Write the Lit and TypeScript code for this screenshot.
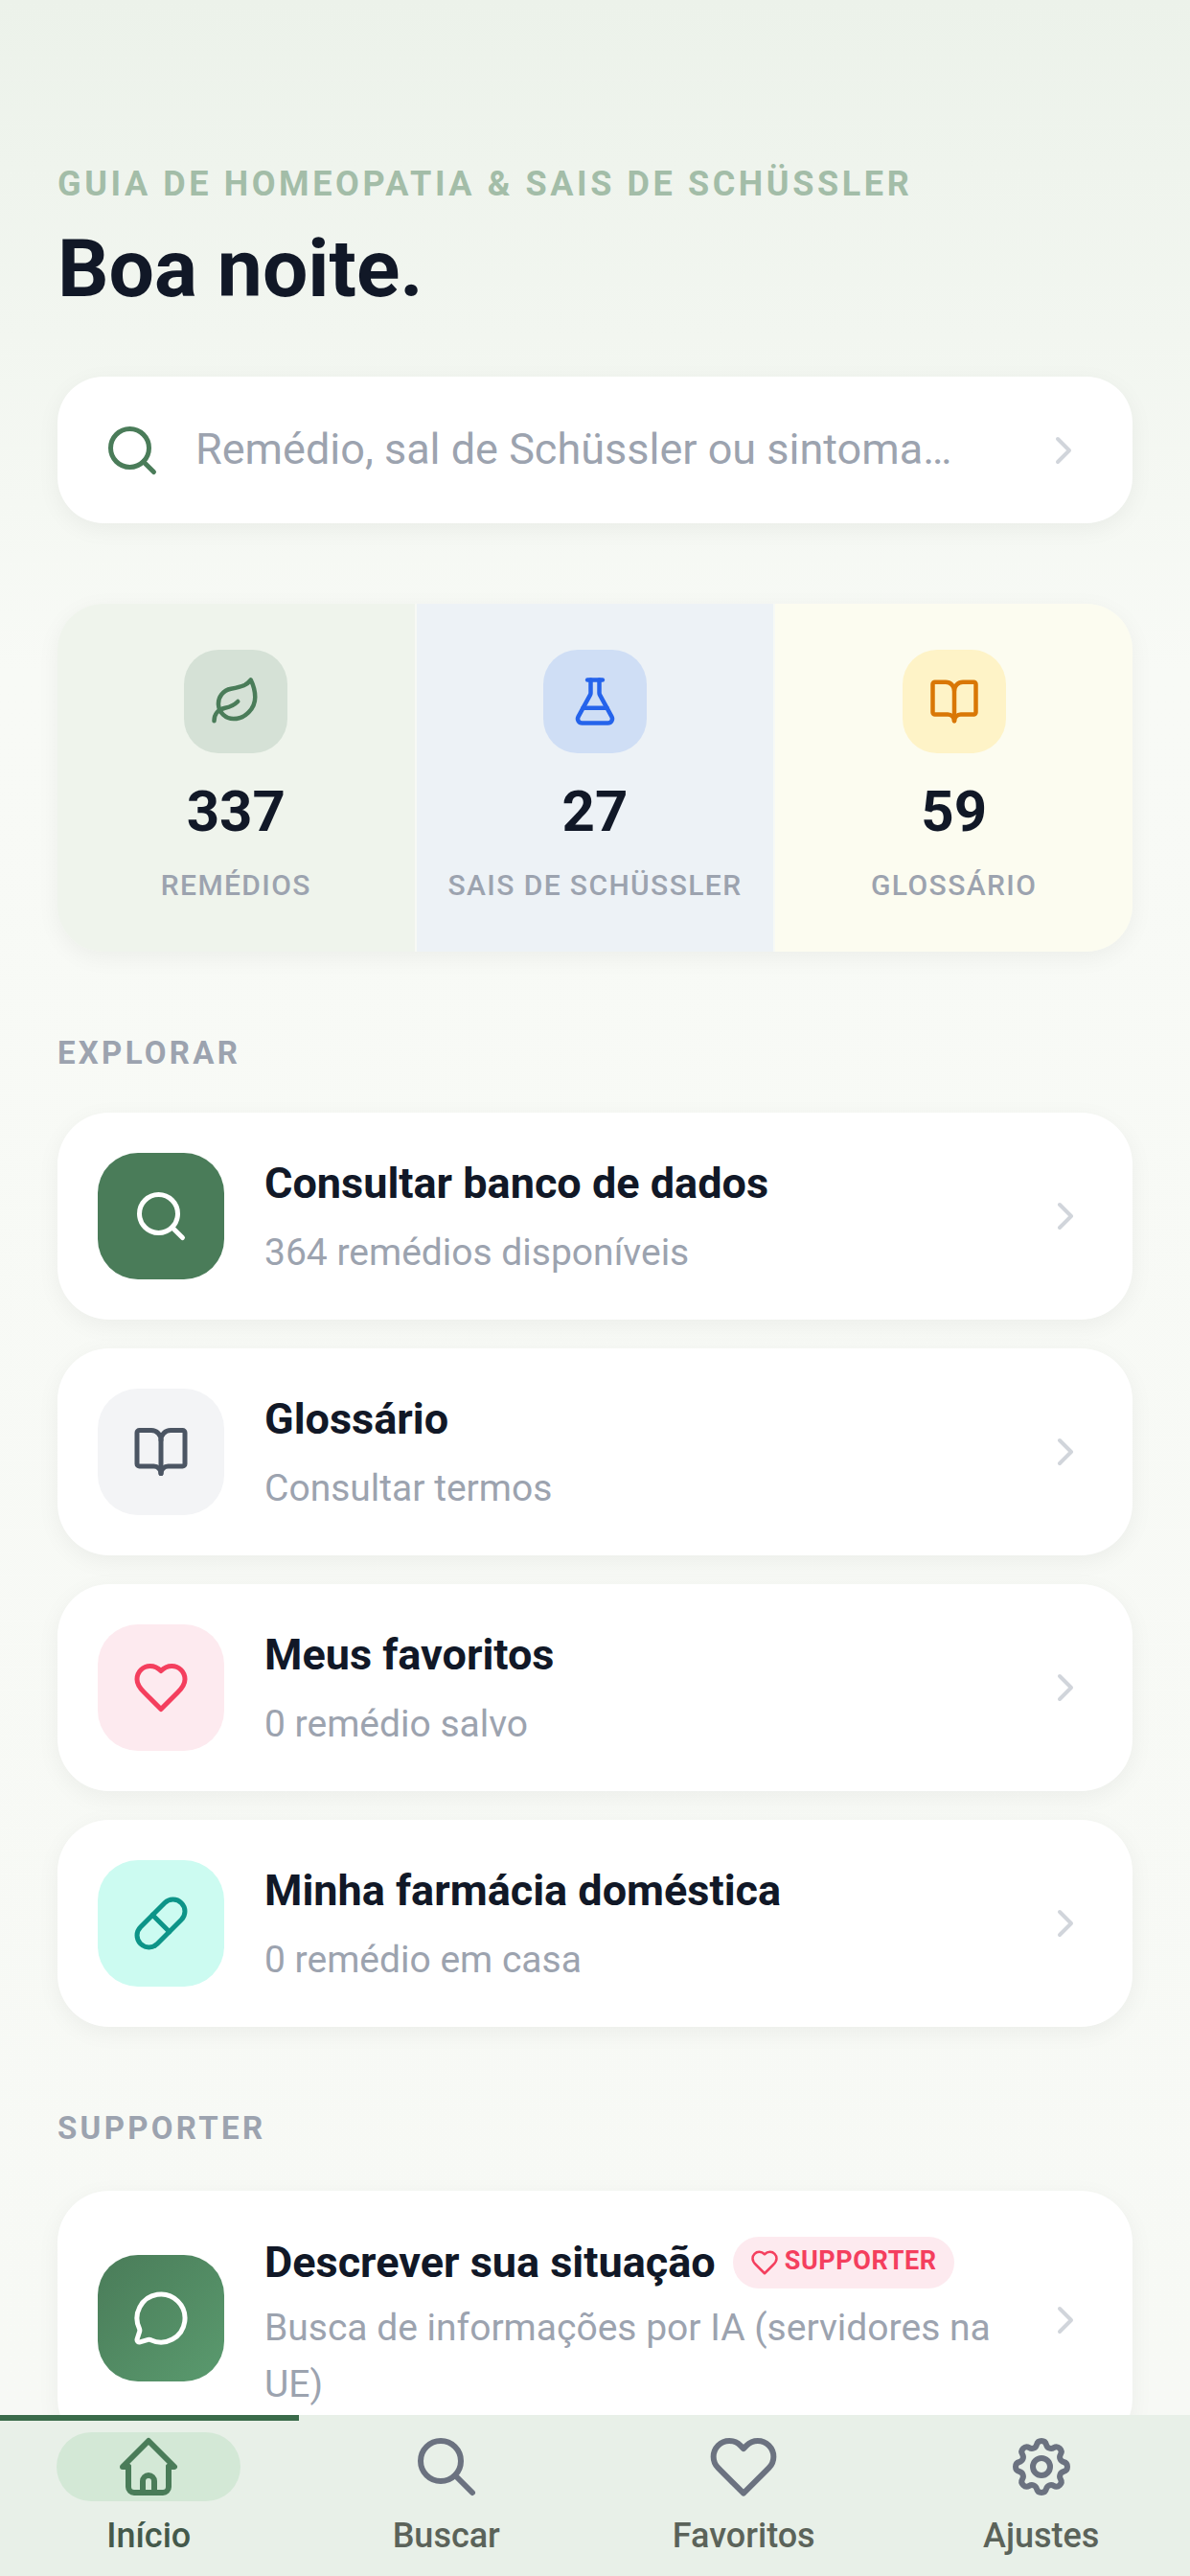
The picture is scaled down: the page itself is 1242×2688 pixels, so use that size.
import { LitElement, html, css, svg } from 'lit';
import { customElement } from 'lit/decorators.js';

const icons = {
  search: svg`<path d="m21 21-4.34-4.34"/><circle cx="11" cy="11" r="8"/>`,
  chevron: svg`<path d="m9 18 6-6-6-6"/>`,
  leaf: svg`<path d="M11 20A7 7 0 0 1 9.8 6.1C15.5 5 17 4.48 19 2c1 2 2 4.18 2 8 0 5.5-4.78 10-10 10Z"/><path d="M2 21c0-3 1.85-5.36 5.08-6C9.5 14.52 12 13 13 12"/>`,
  flask: svg`<path d="M14 2v6a2 2 0 0 0 .245.96l5.51 10.08A2 2 0 0 1 18 22H6a2 2 0 0 1-1.755-2.96l5.51-10.08A2 2 0 0 0 10 8V2"/><path d="M6.453 15h11.094"/><path d="M8.5 2h7"/>`,
  book: svg`<path d="M12 7v14"/><path d="M3 18a1 1 0 0 1-1-1V4a1 1 0 0 1 1-1h5a4 4 0 0 1 4 4 4 4 0 0 1 4-4h5a1 1 0 0 1 1 1v13a1 1 0 0 1-1 1h-6a3 3 0 0 0-3 3 3 3 0 0 0-3-3z"/>`,
  heart: svg`<path d="M19 14c1.49-1.46 3-3.21 3-5.5A5.5 5.5 0 0 0 16.5 3c-1.76 0-3 .5-4.5 2-1.5-1.5-2.74-2-4.5-2A5.5 5.5 0 0 0 2 8.5c0 2.3 1.5 4.05 3 5.5l7 7Z"/>`,
  pill: svg`<path d="m10.5 20.5 10-10a4.95 4.95 0 1 0-7-7l-10 10a4.95 4.95 0 1 0 7 7Z"/><path d="m8.5 8.5 7 7"/>`,
  chat: svg`<path d="M2.992 16.342a2 2 0 0 1 .094 1.167l-1.065 3.29a1 1 0 0 0 1.236 1.168l3.413-.998a2 2 0 0 1 1.099.092 10 10 0 1 0-4.777-4.719"/>`,
  // the tab bar uses a different icon set from the cards
  tabHouse: svg`<path d="M5 12H3l9-9 9 9h-2"/><path d="M5 12v7a2 2 0 0 0 2 2h10a2 2 0 0 0 2-2v-7"/><path d="M10 21v-4a2 2 0 0 1 4 0v4"/>`,
  tabSearch: svg`<circle cx="10" cy="10" r="7"/><path d="m21 21-6-6"/>`,
  tabHeart: svg`<path d="M20.84 4.61a5.5 5.5 0 0 0-7.78 0L12 5.67l-1.06-1.06a5.5 5.5 0 0 0-7.78 7.78l1.06 1.06L12 21.23l7.78-7.78 1.06-1.06a5.5 5.5 0 0 0 0-7.78z"/>`,
  tabGear: svg`<path d="M10.325 4.317c.426-1.756 2.924-1.756 3.35 0a1.724 1.724 0 0 0 2.573 1.066c1.543-.94 3.31.826 2.37 2.37a1.724 1.724 0 0 0 1.065 2.572c1.756.426 1.756 2.924 0 3.35a1.724 1.724 0 0 0-1.066 2.573c.94 1.543-.826 3.31-2.37 2.37a1.724 1.724 0 0 0-2.572 1.065c-.426 1.756-2.924 1.756-3.35 0a1.724 1.724 0 0 0-2.573-1.066c-1.543.94-3.31-.826-2.37-2.37a1.724 1.724 0 0 0-1.065-2.572c-1.756-.426-1.756-2.924 0-3.35a1.724 1.724 0 0 0 1.066-2.573c-.94-1.543.826-3.31 2.37-2.37 1 .608 2.296.07 2.572-1.065z"/><circle cx="12" cy="12" r="3"/>`,
};

type IconName = keyof typeof icons;

const icon = (name: IconName, cls: string) => html`
  <svg class=${cls} viewBox="0 0 24 24" fill="none" stroke="currentColor" stroke-width="2"
    stroke-linecap="round" stroke-linejoin="round">${icons[name]}</svg>
`;

const stats: { icon: IconName; tone: string; value: string; label: string }[] = [
  { icon: 'leaf', tone: 'green', value: '337', label: 'REMÉDIOS' },
  { icon: 'flask', tone: 'blue', value: '27', label: 'SAIS DE SCHÜSSLER' },
  { icon: 'book', tone: 'amber', value: '59', label: 'GLOSSÁRIO' },
];

const links: { icon: IconName; tone: string; title: string; sub: string }[] = [
  { icon: 'search', tone: 'brand', title: 'Consultar banco de dados', sub: '364 remédios disponíveis' },
  { icon: 'book', tone: 'gray', title: 'Glossário', sub: 'Consultar termos' },
  { icon: 'heart', tone: 'rose', title: 'Meus favoritos', sub: '0 remédio salvo' },
  { icon: 'pill', tone: 'teal', title: 'Minha farmácia doméstica', sub: '0 remédio em casa' },
];

const tabs: { icon: IconName; label: string; active?: boolean }[] = [
  { icon: 'tabHouse', label: 'Início', active: true },
  { icon: 'tabSearch', label: 'Buscar' },
  { icon: 'tabHeart', label: 'Favoritos' },
  { icon: 'tabGear', label: 'Ajustes' },
];

@customElement('app-root')
export class AppRoot extends LitElement {
  static styles = css`
    :host {
      display: flex;
      flex-direction: column;
      height: 2688px;
      overflow: hidden;
      font-family: Roboto, sans-serif;
      color: #111827;
      background: #f7f9f5;
    }
    svg {
      display: block;
      flex: none;
    }
    .page {
      flex: 1;
      min-height: 0;
      overflow: hidden;
      padding: 165px 60px 0;
      background: linear-gradient(180deg, #ecf2ea 0, #f8faf6 700px, #f7f9f5 100%);
    }
    .eyebrow {
      font-size: 36px;
      line-height: 54px;
      font-weight: 700;
      letter-spacing: 3.6px;
      color: #a3bda8;
    }
    h1 {
      margin: 11px 0 0;
      font-size: 84px;
      line-height: 102px;
      font-weight: 700;
    }
    .search {
      display: flex;
      align-items: center;
      gap: 36px;
      height: 153px;
      margin-top: 61px;
      padding: 0 48px;
      box-sizing: border-box;
      background: #fff;
      border-radius: 48px;
      box-shadow: 0 6px 24px rgba(0, 0, 0, 0.05);
    }
    .search input {
      flex: 1;
      min-width: 0;
      border: none;
      outline: none;
      padding: 0 0 3px;
      background: none;
      font: 400 45px Roboto, sans-serif;
      color: #111827;
    }
    .search input::placeholder {
      color: #9ca3af;
      opacity: 1;
    }
    .i60 {
      width: 60px;
      height: 60px;
    }
    .i54 {
      width: 54px;
      height: 54px;
    }
    .i72 {
      width: 72px;
      height: 72px;
    }
    .i30 {
      width: 30px;
      height: 30px;
    }
    .search .i60 {
      color: #4a7c59;
    }
    .chev {
      width: 48px;
      height: 48px;
      color: #d1d5db;
    }
    .stats {
      display: grid;
      grid-template-columns: repeat(3, 1fr);
      gap: 2px;
      margin-top: 84px;
      border-radius: 48px;
      overflow: hidden;
      background: #f7f9f5;
      box-shadow: 0 6px 24px rgba(0, 0, 0, 0.05);
    }
    .stat {
      display: flex;
      flex-direction: column;
      align-items: center;
      padding: 48px 0 47px;
    }
    .stat.green {
      background: #eff4ec;
    }
    .stat.blue {
      background: #edf2f6;
    }
    .stat.amber {
      background: #fcfcf0;
    }
    .stat-icon {
      display: flex;
      align-items: center;
      justify-content: center;
      width: 108px;
      height: 108px;
      border-radius: 36px;
    }
    .green .stat-icon {
      background: #d5e1d6;
      color: #4a7c59;
    }
    .blue .stat-icon {
      background: #cfdef5;
      color: #2563eb;
    }
    .amber .stat-icon {
      background: #fef3c7;
      color: #d97706;
    }
    .value {
      margin-top: 25px;
      font-size: 60px;
      line-height: 72px;
      font-weight: 700;
    }
    .label {
      margin-top: 18px;
      font-size: 30px;
      line-height: 45px;
      font-weight: 500;
      letter-spacing: 1.4px;
      color: #9ca3af;
    }
    h2 {
      margin: 82px 0 38px;
      font-size: 33px;
      line-height: 48px;
      font-weight: 700;
      letter-spacing: 3.3px;
      color: #9ca3af;
    }
    h2.wide {
      margin-bottom: 41px;
    }
    .list {
      display: flex;
      flex-direction: column;
      gap: 30px;
    }
    .card {
      display: flex;
      align-items: center;
      gap: 42px;
      padding: 42px 46px 42px 42px;
      background: #fff;
      border-radius: 54px;
      box-shadow: 0 6px 24px rgba(0, 0, 0, 0.05);
    }
    .card-icon {
      display: flex;
      align-items: center;
      justify-content: center;
      flex: none;
      width: 132px;
      height: 132px;
      border-radius: 42px;
    }
    .brand {
      background: #4a7c59;
      color: #fff;
    }
    .gray {
      background: #f3f4f6;
      color: #4b5563;
    }
    .rose {
      background: #fdeaef;
      color: #f43f5e;
    }
    .teal {
      background: #ccfbf1;
      color: #0d9488;
    }
    .gradient {
      background: linear-gradient(135deg, #4a7c59, #5a9a6e);
      color: #fff;
    }
    .text {
      flex: 1;
      min-width: 0;
      align-self: flex-start;
      margin-bottom: -2px;
    }
    .title {
      display: flex;
      align-items: center;
      gap: 18px;
      font-size: 45px;
      line-height: 64px;
      font-weight: 700;
    }
    .sub {
      margin-top: 11px;
      font-size: 39px;
      line-height: 58.5px;
      color: #9ca3af;
    }
    .card.tall {
      align-items: flex-start;
    }
    .tall .card-icon {
      margin-top: 25px;
    }
    .tall .chev {
      margin-top: 69px;
    }
    .tall .title {
      padding-top: 1px;
    }
    .tall .sub {
      margin-top: 7px;
    }
    .badge {
      display: flex;
      align-items: center;
      gap: 6px;
      height: 54px;
      padding: 0 18px;
      border-radius: 27px;
      background: #fdeaef;
      color: #f43f5e;
      font-size: 27px;
      line-height: 54px;
      font-weight: 700;
      letter-spacing: 0.6px;
    }
    .badge span {
      padding-bottom: 5px;
    }
    .tabbar {
      position: relative;
      flex: none;
      height: 168px;
      display: grid;
      grid-template-columns: repeat(4, 1fr);
      background: #e8f0e8;
    }
    .indicator {
      position: absolute;
      left: 0;
      top: 0;
      width: 312px;
      height: 6px;
      background: #3a6b4a;
    }
    .tab {
      display: flex;
      flex-direction: column;
      align-items: center;
      padding-top: 18px;
      font-size: 36px;
      line-height: 54px;
      font-weight: 500;
      color: #5b635a;
    }
    .tab.active {
      color: #44594b;
    }
    .tab-icon {
      display: flex;
      justify-content: center;
      width: 192px;
      height: 72px;
      margin-bottom: 9px;
      border-radius: 36px;
      color: #6b7280;
    }
    .tab.active .tab-icon {
      background: #d3e8d6;
      color: #4a7c59;
    }
  `;

  render() {
    return html`
      <div class="page">
        <div class="eyebrow">GUIA DE HOMEOPATIA &amp; SAIS DE SCHÜSSLER</div>
        <h1>Boa noite.</h1>

        <div class="search">
          ${icon('search', 'i60')}
          <input placeholder="Remédio, sal de Schüssler ou sintoma…" />
          ${icon('chevron', 'chev')}
        </div>

        <div class="stats">
          ${stats.map(
            (s) => html`
              <div class="stat ${s.tone}">
                <div class="stat-icon">${icon(s.icon, 'i54')}</div>
                <div class="value">${s.value}</div>
                <div class="label">${s.label}</div>
              </div>
            `
          )}
        </div>

        <h2>EXPLORAR</h2>
        <div class="list">
          ${links.map(
            (l) => html`
              <div class="card">
                <div class="card-icon ${l.tone}">${icon(l.icon, 'i60')}</div>
                <div class="text">
                  <div class="title">${l.title}</div>
                  <div class="sub">${l.sub}</div>
                </div>
                ${icon('chevron', 'chev')}
              </div>
            `
          )}
        </div>

        <h2 class="wide">SUPPORTER</h2>
        <div class="card tall">
          <div class="card-icon gradient">${icon('chat', 'i60')}</div>
          <div class="text">
            <div class="title">
              Descrever sua situação
              <div class="badge">${icon('heart', 'i30')}<span>SUPPORTER</span></div>
            </div>
            <div class="sub">Busca de informações por IA (servidores na UE)</div>
          </div>
          ${icon('chevron', 'chev')}
        </div>
      </div>

      <nav class="tabbar">
        <div class="indicator"></div>
        ${tabs.map(
          (t) => html`
            <div class="tab ${t.active ? 'active' : ''}">
              <div class="tab-icon">${icon(t.icon, 'i72')}</div>
              ${t.label}
            </div>
          `
        )}
      </nav>
    `;
  }
}
